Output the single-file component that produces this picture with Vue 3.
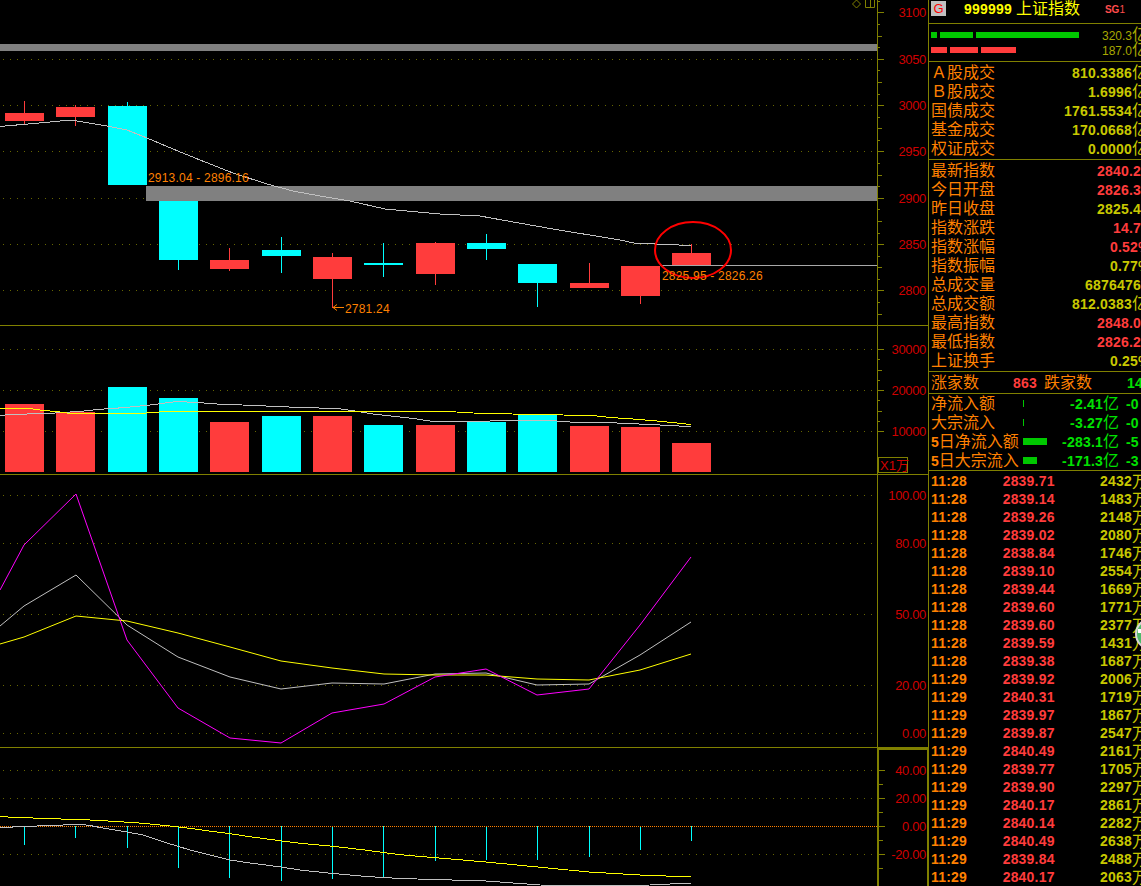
<script setup>
// candle data, all in screen pixels
const candles = [
  { x: 5, top: 113, bottom: 121, high: 101, low: 124, up: true },
  { x: 56, top: 107, bottom: 117, high: 105, low: 126, up: true },
  { x: 108, top: 106, bottom: 185, high: 102, low: 185, up: false },
  { x: 159, top: 186, bottom: 260, high: 186, low: 270, up: false },
  { x: 210, top: 260, bottom: 269, high: 248, low: 271, up: true },
  { x: 262, top: 250, bottom: 256, high: 237, low: 273, up: false },
  { x: 313, top: 257, bottom: 279, high: 253, low: 308, up: true },
  { x: 364, top: 263, bottom: 265, high: 243, low: 277, up: false },
  { x: 416, top: 243, bottom: 274, high: 242, low: 285, up: true },
  { x: 467, top: 243, bottom: 249, high: 234, low: 260, up: false },
  { x: 518, top: 264, bottom: 283, high: 264, low: 307, up: false },
  { x: 570, top: 283, bottom: 288, high: 263, low: 288, up: true },
  { x: 621, top: 266, bottom: 296, high: 266, low: 304, up: true },
  { x: 672, top: 253, bottom: 265, high: 244, low: 265, up: true },
]

const volumes = [
  [5, 404, 1], [56, 412, 1], [108, 387, 0], [159, 398, 0], [210, 422, 1], [262, 416, 0], [313, 416, 1],
  [364, 425, 0], [416, 425, 1], [467, 422, 0], [518, 415, 0], [570, 426, 1], [621, 427, 1], [672, 443, 1],
]

const priceMa = '0,126.5 20,124.7 50,122 70,120 80,121.5 107,126 127,130 147,138 173,149 200,160 233,173 267,184 293,191 320,196 350,201 385,209 440,214 480,216 502,220 553,229 620,240 634,243 655,244 679,245 691,245'
const volGrey = '0,415.3 17,414.3 50,413.3 81,411.3 100,409.3 123,407.7 150,405 177,401.5 200,402.7 217,404 250,405.3 300,407.5 337,408.5 358,411.5 373,414 400,417 417,419 433,421.5 467,421.5 513,420.5 550,420.5 577,422.5 617,423 650,424.5 691,426.6'
const volYellow = '0,408 30,408.5 40,410 60,412 70,413.5 140,413.5 166,411.5 255,411 400,411.5 448,411.5 473,413 512,414 563,415 597,416 610,417.5 633,419 657,421 677,423 691,424.5'
const kdjK = '0,626 24,606 76,575 127,625 178,657 230,677 281,689 332,683 384,684 435,674 486,673 537,685 589,684 640,655 691,622'
const kdjD = '0,644 24,637 76,616 127,621 178,633 230,647 281,661 332,668 384,674 435,675 486,675 537,679 589,680 640,670 691,654'
const kdjJ = '0,590 24,545 76,494 127,640 178,708 230,738 281,743 332,713 384,704 435,677 486,669 537,695 589,689 640,625 691,557'
const macdYellow = '0,816.7 16,817.3 50,818.7 84,819.7 102,820.7 120,821.7 143,823.3 167,825.7 190,828.3 207,830.7 230,833.7 250,836.7 277,840.3 300,843.3 333,846.3 367,850.3 400,854.7 486,862 589,872 640,875 691,877'
const macdGrey = '0,827.5 12,827.5 12,826 37,826 63,825 80,824.3 90,825.5 100,827.5 127,832 143,835 167,843 190,850 230,860 250,863 281,867 300,870 333,873.5 367,876.5 400,878.5 486,881 540,885 600,886 650,885 691,883'
const macdBars = [
  [24, 845], [75, 838], [127, 848], [178, 868], [229, 878], [281, 881], [332, 879],
  [383, 877], [435, 861], [486, 860], [537, 860], [589, 857], [640, 850], [691, 841],
]

const priceAxis = [[3100, 12], [3050, 59], [3000, 105], [2950, 151], [2900, 198], [2850, 244], [2800, 290]]
const volAxis = [[30000, 349], [20000, 390], [10000, 431]]
const kdjAxis = [['100.00', 495], ['80.00', 543], ['50.00', 614], ['20.00', 685], ['0.00', 733]]
const macdAxis = [['40.00', 770], ['20.00', 798], ['0.00', 826], ['-20.00', 854]]

const makeTicks = (start, step, count, every) => {
  const out = []
  for (let i = 0; i < count; i++) {
    const y = Math.round(start + step * i)
    const pos = i % every
    let len = 2
    if (pos === 0) len = 6
    else if (every === 2 || pos === every / 2) len = 4
    out.push({ y, len })
  }
  return out
}
const priceTicks = makeTicks(0.9, 11.58, 28, 4).map((t, i) => ({ ...t, len: [2, 6, 2, 4][i % 4] }))
const volTicks = makeTicks(349, 10.25, 9, 4)
const macdTicks = makeTicks(770, 14, 8, 2)

const turnover = [
  { label: 'Ａ股成交', value: '810.3386', unit: '亿' },
  { label: 'Ｂ股成交', value: '1.6996', unit: '亿' },
  { label: '国债成交', value: '1761.5534', unit: '亿' },
  { label: '基金成交', value: '170.0668', unit: '亿' },
  { label: '权证成交', value: '0.0000', unit: '亿' },
]
const stats = [
  { label: '最新指数', value: '2840.2', up: true },
  { label: '今日开盘', value: '2826.3', up: true },
  { label: '昨日收盘', value: '2825.4' },
  { label: '指数涨跌', value: '14.7', up: true },
  { label: '指数涨幅', value: '0.52', unit: '%', up: true },
  { label: '指数振幅', value: '0.77', unit: '%' },
  { label: '总成交量', value: '6876476' },
  { label: '总成交额', value: '812.0383', unit: '亿' },
  { label: '最高指数', value: '2848.0', up: true },
  { label: '最低指数', value: '2826.2', up: true },
  { label: '上证换手', value: '0.25', unit: '%' },
]
const flows = [
  { num: '', label: '净流入额', bar: 1, value: '-2.41', pct: '-0' },
  { num: '', label: '大宗流入', bar: 1, value: '-3.27', pct: '-0' },
  { num: '5', label: '日净流入额', bar: 24, value: '-283.1', pct: '-5' },
  { num: '5', label: '日大宗流入', bar: 14, value: '-171.3', pct: '-3' },
]
const ticks = [
  ['11:28', '2839.71', '2432'], ['11:28', '2839.14', '1483'], ['11:28', '2839.26', '2148'], ['11:28', '2839.02', '2080'],
  ['11:28', '2838.84', '1746'], ['11:28', '2839.10', '2554'], ['11:28', '2839.44', '1669'], ['11:28', '2839.60', '1771'],
  ['11:28', '2839.60', '2377'], ['11:28', '2839.59', '1431'], ['11:28', '2839.38', '1687'], ['11:29', '2839.92', '2006'],
  ['11:29', '2840.31', '1719'], ['11:29', '2839.97', '1867'], ['11:29', '2839.87', '2547'], ['11:29', '2840.49', '2161'],
  ['11:29', '2839.77', '1705'], ['11:29', '2839.90', '2297'], ['11:29', '2840.17', '2861'], ['11:29', '2840.14', '2282'],
  ['11:29', '2840.49', '2638'], ['11:29', '2839.84', '2488'], ['11:29', '2840.17', '2063'],
]
</script>

<template>
  <div class="app">
    <div class="charts">
      <section class="panel main-panel">
        <svg width="928" height="325" viewBox="0 0 928 325">
          <line v-for="a in priceAxis.slice(1)" :key="a[0]" class="dots" x1="3" x2="877" :y1="a[1] + 0.5" :y2="a[1] + 0.5" />
          <rect class="shade" x="0" y="44" width="877" height="7" />
          <line class="thin" x1="660" x2="877" y1="265.5" y2="265.5" />
          <g v-for="c in candles" :key="c.x">
            <rect :class="c.up ? 'red' : 'cyan'" :x="c.x + 19" :y="c.high" width="1" :height="c.low - c.high" />
            <rect :class="c.up ? 'red' : 'cyan'" :x="c.x" :y="c.top" width="39" :height="c.bottom - c.top" />
          </g>
          <rect class="shade" x="146" y="186" width="731" height="15" />
          <polyline class="line grey" :points="priceMa" />
          <ellipse class="ring" cx="693" cy="250" rx="38" ry="28" />
          <text class="note" x="148" y="182">2913.04 - 2896.16</text>
          <text class="note" x="662" y="280">2825.95 - 2826.26</text>
          <text class="note" x="345" y="313">2781.24</text>
          <path class="arrow" d="M344 307.5H333M337 304.5l-4 3 4 3" />
          <path class="mark" d="M856.5 0l4 4-4 4-4-4z" />
          <path class="mark" d="M865.5 0v7.5h9V0M870.5 0v7.5" />
          <line class="axis" x1="877.5" x2="877.5" y1="0" y2="325" />
          <line v-for="t in priceTicks" :key="t.y" class="axis" x1="878" :x2="878 + t.len" :y1="t.y + 0.5" :y2="t.y + 0.5" />
          <text v-for="a in priceAxis" :key="a[0]" class="scale" x="926" :y="a[1] + 5">{{ a[0] }}</text>
        </svg>
      </section>

      <section class="panel vol-panel">
        <svg width="928" height="148" viewBox="0 326 928 148">
          <line v-for="a in volAxis" :key="a[0]" class="dots" x1="3" x2="877" :y1="a[1] + 0.5" :y2="a[1] + 0.5" />
          <rect v-for="v in volumes" :key="v[0]" :class="v[2] ? 'red' : 'cyan'" :x="v[0]" :y="v[1]" width="39" :height="472 - v[1]" />
          <polyline class="line grey" :points="volGrey" />
          <polyline class="line yellow" :points="volYellow" />
          <line class="axis" x1="877.5" x2="877.5" y1="326" y2="474" />
          <line v-for="t in volTicks" :key="t.y" class="axis" x1="878" :x2="878 + t.len" :y1="t.y + 0.5" :y2="t.y + 0.5" />
          <text v-for="a in volAxis" :key="a[0]" class="scale" x="926" :y="a[1] + 5">{{ a[0] }}</text>
          <rect class="unit-box" x="878.5" y="457.5" width="29" height="15" />
          <text class="unit-text" x="880" y="470">X1万</text>
        </svg>
      </section>

      <section class="panel kdj-panel">
        <svg width="928" height="272" viewBox="0 475 928 272">
          <line v-for="a in kdjAxis" :key="a[0]" class="dots" x1="3" x2="877" :y1="a[1] + 0.5" :y2="a[1] + 0.5" />
          <polyline class="line grey" :points="kdjK" />
          <polyline class="line yellow" :points="kdjD" />
          <polyline class="line magenta" :points="kdjJ" />
          <line class="axis" x1="877.5" x2="877.5" y1="475" y2="747" />
          <text v-for="a in kdjAxis" :key="a[0]" class="scale" x="926" :y="a[1] + 5">{{ a[0] }}</text>
        </svg>
      </section>

      <section class="panel macd-panel">
        <svg width="928" height="138" viewBox="0 748 928 138">
          <line v-for="a in macdAxis.filter((m) => m[1] !== 826)" :key="a[0]" class="dots" x1="3" x2="877" :y1="a[1] + 0.5" :y2="a[1] + 0.5" />
          <rect v-for="b in macdBars" :key="b[0]" class="cyan" :x="b[0]" y="826" width="1" :height="b[1] - 826" />
          <line class="zero" x1="0" x2="877" y1="826.5" y2="826.5" />
          <polyline class="line yellow" :points="macdYellow" />
          <polyline class="line grey" :points="macdGrey" />
          <path class="active-axis" d="M878 886V749H928V886" />
          <line v-for="t in macdTicks" :key="t.y" class="axis" x1="879" :x2="879 + t.len" :y1="t.y + 0.5" :y2="t.y + 0.5" />
          <text v-for="a in macdAxis" :key="a[0]" class="scale" x="926" :y="a[1] + 5">{{ a[0] }}</text>
        </svg>
      </section>
    </div>

    <aside class="side">
      <header class="head">
        <span class="g-box">G</span>
        <b class="code">999999</b>
        <span class="name">上证指数</span>
        <span class="sg">SG<i>1</i></span>
      </header>

      <div class="block power">
        <div class="power-row">
          <div class="segs green-segs">
            <i style="width: 6px"></i><i style="width: 33px"></i><i style="width: 103px"></i>
          </div>
          <span class="power-val">320.3<span class="u">亿</span></span>
        </div>
        <div class="power-row">
          <div class="segs red-segs">
            <i style="width: 16px"></i><i style="width: 28px"></i><i style="width: 35px"></i>
          </div>
          <span class="power-val">187.0<span class="u">亿</span></span>
        </div>
      </div>

      <div class="block turnover">
        <div v-for="r in turnover" :key="r.label" class="row">
          <span class="label">{{ r.label }}</span>
          <b class="value">{{ r.value }}</b><span class="u olive">{{ r.unit }}</span>
        </div>
      </div>

      <div class="block stats">
        <div v-for="r in stats" :key="r.label" class="row">
          <span class="label">{{ r.label }}</span>
          <b class="value" :class="{ rise: r.up }">{{ r.value }}</b>
          <b v-if="r.unit === '%'" class="pct-unit value" :class="{ rise: r.up }">%</b>
          <span v-else-if="r.unit" class="u olive">{{ r.unit }}</span>
        </div>
      </div>

      <div class="block counts">
        <span class="label">涨家数</span>
        <b class="rise up-count">863</b>
        <span class="label">跌家数</span>
        <b class="fall down-count">14</b>
      </div>

      <div class="block flows">
        <div v-for="f in flows" :key="f.label" class="flow">
          <span class="label flow-label"><b v-if="f.num">{{ f.num }}</b>{{ f.label }}</span>
          <span class="flow-bar"><i :style="{ width: f.bar + 'px' }"></i></span>
          <b class="fall flow-val">{{ f.value }}</b>
          <span class="fall flow-unit">亿</span>
          <b class="fall flow-pct">{{ f.pct }}</b>
        </div>
      </div>

      <div class="deals">
        <div v-for="(d, i) in ticks" :key="i" class="deal">
          <b class="time">{{ d[0] }}</b>
          <b class="rise price">{{ d[1] }}</b>
          <b class="vol">{{ d[2] }}</b>
          <span class="u olive">万</span>
        </div>
      </div>

      <div class="float-ball"><i></i></div>
    </aside>
  </div>
</template>

<style scoped>
.app {
  display: flex;
  width: 1141px;
  height: 886px;
  overflow: hidden;
  background: #000;
  font-family: "Liberation Sans", "Noto Sans CJK SC", sans-serif;
}

.charts {
  display: flex;
  flex-direction: column;
  width: 928px;
  flex: none;
  border-right: 1px solid #808000;
}
.panel {
  flex: none;
  border-bottom: 1px solid #808000;
}
.panel svg {
  display: block;
}
.macd-panel {
  border-bottom: 0;
}

.dots {
  stroke: #808000;
  stroke-width: 1;
  stroke-dasharray: 1 6;
  opacity: 0.8;
}
.shade {
  fill: #808080;
}
.thin {
  stroke: #a8a8a8;
  stroke-width: 1;
}
.red {
  fill: #ff3c3c;
}
.cyan {
  fill: #00ffff;
}
.line {
  fill: none;
  stroke-width: 1;
  shape-rendering: crispEdges;
}
.grey {
  stroke: #c0c0c0;
}
.yellow {
  stroke: #ffff00;
}
.magenta {
  stroke: #ff00ff;
  shape-rendering: auto;
}
.kdj-panel .grey,
.kdj-panel .yellow {
  shape-rendering: auto;
}
.ring {
  fill: none;
  stroke: #f00;
  stroke-width: 2;
}
.note {
  fill: #ff8000;
  font-size: 12px;
  letter-spacing: 0.2px;
}
.arrow {
  fill: none;
  stroke: #ff8000;
  stroke-width: 1;
}
.mark {
  fill: none;
  stroke: #808000;
  stroke-width: 1;
}
.axis {
  stroke: #808000;
  stroke-width: 1;
}
.active-axis {
  fill: none;
  stroke: #808000;
  stroke-width: 2;
}
.zero {
  stroke: #ff8000;
  stroke-width: 1;
  stroke-dasharray: 1 1;
}
.scale {
  fill: #d00000;
  font-size: 13px;
  letter-spacing: -0.35px;
  text-anchor: end;
}
.unit-box {
  fill: #000;
  stroke: #808000;
  stroke-width: 1;
}
.unit-text {
  fill: #d00000;
  font-size: 13px;
}

.side {
  position: relative;
  width: 212px;
  flex: none;
  overflow: hidden;
  white-space: nowrap;
}
.head {
  display: flex;
  align-items: center;
  height: 23px;
  padding-left: 2px;
  border-bottom: 1px solid #808000;
}
.g-box {
  width: 15px;
  height: 15px;
  margin-top: -6px;
  background: #c0c0c0;
  color: #f00;
  font-size: 13px;
  line-height: 15px;
  text-align: center;
}
.code {
  margin-left: 18px;
  color: #ffff00;
  font-size: 14px;
  letter-spacing: 0.2px;
  margin-top: -6px;
}
.name {
  margin-left: 4px;
  color: #ffff00;
  font-size: 16px;
  line-height: 18px;
  margin-top: -6px;
}
.sg {
  margin-left: 25px;
  margin-top: -5px;
  color: #ff4c4c;
  font-size: 10px;
  font-weight: bold;
}
.sg i {
  font-style: normal;
  font-weight: normal;
}

.block {
  border-bottom: 1px solid #808000;
}
.power {
  height: 34px;
  padding-top: 3px;
}
.power-row {
  display: flex;
  align-items: center;
  justify-content: space-between;
  height: 15px;
  padding-left: 2px;
}
.segs {
  display: flex;
  gap: 3px;
}
.segs i {
  display: block;
  height: 6px;
}
.green-segs i {
  background: #00c800;
}
.red-segs i {
  background: #ff3c3c;
}
.power-val {
  color: #a8a800;
  font-size: 12px;
  line-height: 15px;
}
.u {
  display: inline-block;
  width: 9px;
  font-size: 16px;
  line-height: 19px;
  font-weight: 400;
}
.olive {
  color: #c8c800;
}

.turnover {
  height: 96px;
  padding-top: 1px;
}
.stats {
  height: 210px;
  padding-top: 1px;
}
.row {
  display: flex;
  align-items: center;
  height: 19px;
  padding-left: 2px;
}
.row .label {
  margin-right: auto;
}
.label {
  color: #ff8000;
  font-size: 16px;
  line-height: 19px;
}
.value {
  color: #c8c800;
  font-size: 14px;
  letter-spacing: 0.2px;
}
.value.rise {
  color: #ff3c3c;
}
.pct-unit {
  width: 3px;
}
.rise {
  color: #ff3c3c;
}
.fall {
  color: #00e000;
}
.counts {
  display: flex;
  align-items: center;
  height: 21px;
  padding-left: 2px;
  font-size: 14px;
}
.up-count {
  margin-left: 34px;
  letter-spacing: 0.2px;
}
.counts .label + .up-count + .label {
  margin-left: 7px;
}
.down-count {
  margin-left: 35px;
  letter-spacing: 0.2px;
}

.flows {
  height: 76px;
}
.flow {
  display: flex;
  align-items: center;
  height: 19px;
  padding-left: 2px;
}
.flow-label {
  width: 92px;
}
.flow-label b {
  font-size: 14px;
}
.flow-bar {
  width: 32px;
}
.flow-bar i {
  display: block;
  height: 7px;
  background: #00c800;
}
.flow-val {
  width: 48px;
  font-size: 14px;
  text-align: right;
  letter-spacing: 0.2px;
}
.flow-unit {
  width: 16px;
  font-size: 16px;
  line-height: 19px;
}
.flow-pct {
  margin-left: 7px;
  font-size: 14px;
}

.deals {
  padding-top: 1px;
}
.deal {
  display: flex;
  align-items: center;
  height: 18px;
  padding-left: 2px;
  font-size: 14px;
  letter-spacing: 0.2px;
}
.time {
  width: 72px;
  color: #ff8000;
}
.price {
  width: 80px;
}
.vol {
  width: 50px;
  color: #c8c800;
  text-align: right;
  letter-spacing: 0.2px;
}

.float-ball {
  position: absolute;
  left: 206px;
  top: 618px;
  width: 28px;
  height: 28px;
  border: 2px solid #d8d8d8;
  border-radius: 50%;
  background: #4fb96a;
}
.float-ball i {
  position: absolute;
  left: 1px;
  top: 9px;
  width: 6px;
  height: 4px;
  background: #fff;
}
</style>

<style>
html,
body {
  margin: 0;
  background: #000;
}
</style>
